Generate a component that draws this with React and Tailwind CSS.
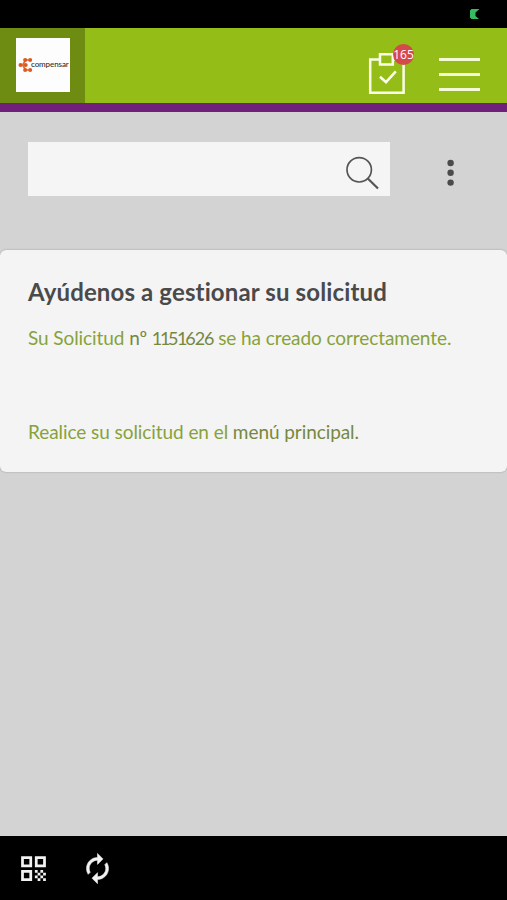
import { MdQrCode } from 'react-icons/md';

function Logo() {
  return (
    <div className="w-[85px] h-full bg-[#6f8c12] pt-[10px] pl-4">
      <div className="w-[54px] h-[54px] bg-[#fdfdfd] flex items-center pl-[2px]">
        <svg width="15" height="16" viewBox="0 0 15 16" className="shrink-0">
          <g stroke="#e2692c" strokeWidth="1.6">
            <path d="M7 3h5M7 13h5M3 8h5M5 7l3-4M5 9l3 4" fill="none" />
          </g>
          <g fill="#dc5b22">
            <circle cx="7.2" cy="3" r="2.1" />
            <circle cx="12.2" cy="3" r="2" />
            <circle cx="2.6" cy="8" r="2.1" />
            <circle cx="7.6" cy="8" r="2.1" />
            <circle cx="7.2" cy="13" r="2.1" />
            <circle cx="12.2" cy="13" r="2" />
          </g>
        </svg>
        <span className="-ml-[2px] -mt-[2px] text-[8px] leading-none tracking-[-0.1px] font-medium text-[#30302e] font-['Lato',sans-serif]">
          compensar
        </span>
      </div>
    </div>
  );
}

function TasksButton() {
  return (
    <button type="button" className="relative w-[46px] h-[54px]">
      <svg width="46" height="54" viewBox="0 0 46 54" fill="none" stroke="#fbffe9" strokeWidth="2.5">
        <path d="M11 17.5H2.2v33.2h33.4V17.5H25" />
        <path d="M12 12.2h12.8v10.3H12z" />
        <path d="M12 34.8l6 5.4L27.8 29.4" />
      </svg>
      <span className="absolute left-[25px] top-[2px] w-[21px] h-[21px] rounded-full bg-[#d5484b] text-white text-[12px] leading-[21px] font-medium whitespace-nowrap font-['Open_Sans',sans-serif] flex justify-center">
        165
      </span>
    </button>
  );
}

function RefreshIcon() {
  return (
    <svg width="33" height="33" viewBox="0 0 24 24" className="ml-[31px]" fill="currentColor" stroke="currentColor" strokeWidth="0.4">
      <path d="M12 6v3l4-4-4-4v3c-4.42 0-8 3.58-8 8 0 1.57.46 3.03 1.24 4.26L6.7 14.8c-.45-.83-.7-1.79-.7-2.8 0-3.31 2.69-6 6-6z" />
      <path d="M18.76 7.74L17.3 9.2c.44.84.7 1.79.7 2.8 0 3.31-2.69 6-6 6v-3l-4 4 4 4v-3c4.42 0 8-3.58 8-8 0-1.57-.46-3.03-1.24-4.26z" />
    </svg>
  );
}

export default function App() {
  return (
    <div className="w-full h-[900px] flex flex-col bg-[#d3d3d3] font-['Lato',sans-serif] [font-variant-ligatures:none]">
      {/* Status bar */}
      <div className="h-7 shrink-0 bg-black flex justify-end pt-[9px] pr-[27px]">
        <svg width="10" height="11" viewBox="0 0 10 11">
          <path d="M1.5 0h8L5.5 3.5v3.5l3.5 3H1.5L0 8.5v-7z" fill="#35bb60" />
        </svg>
      </div>

      {/* Header */}
      <header className="h-[84px] shrink-0 flex bg-[#94be17] border-b-[9px] border-[#70207b]">
        <Logo />
        <div className="ml-auto flex pt-[14px] pr-[27px]">
          <TasksButton />
          <button type="button" className="ml-[25px] mt-4 h-[33px] w-[41px] flex flex-col justify-between">
            <span className="w-full h-[3px] bg-[#f3fad5]" />
            <span className="w-full h-[3px] bg-[#f3fad5]" />
            <span className="w-full h-[3px] bg-[#f3fad5]" />
          </button>
        </div>
      </header>

      {/* Search */}
      <div className="h-[138px] shrink-0 flex pt-[30px] pl-7">
        <div className="w-[362px] h-[54px] bg-[#f5f5f5] flex justify-end pt-[13px] pr-[11px]">
          <svg width="34" height="35" viewBox="0 0 34 35" fill="none" stroke="#555">
            <circle cx="14.2" cy="14.8" r="12.2" strokeWidth="1.7" />
            <path d="M22.8 23.5l10.2 10" strokeWidth="2.2" />
          </svg>
        </div>
        <svg width="8" height="28" viewBox="0 0 8 28" className="ml-[57px] mt-[17px]" fill="#4b4b4b">
          <circle cx="3.6" cy="4" r="3.2" />
          <circle cx="3.6" cy="13.8" r="3.2" />
          <circle cx="3.6" cy="23.6" r="3.2" />
        </svg>
      </div>

      {/* Message */}
      <main className="h-[222px] shrink-0 rounded-md bg-[#f4f4f4] shadow-[0_0_2px_rgba(0,0,0,0.3)] pl-7 pt-[27px] whitespace-nowrap">
        <h1 className="text-[24px] leading-[30px] tracking-[0.13px] font-bold text-[#4a4a4a]">
          Ayúdenos a gestionar su solicitud
        </h1>
        <p className="mt-[18px] text-[19px] leading-[26px] tracking-[-0.08px] text-[#87a23a]">
          <span>Su Solicitud </span>
          <span className="text-[#76883f]">
            nº <span className="text-[18px] tracking-[-2.4px]">11</span>
            <span className="text-[18px] tracking-[-1.5px]">5</span>
            <span className="text-[18px] tracking-[-2px]">1</span>
            <span className="text-[18px] tracking-[-1.1px]">626</span>
          </span>
          <span> se ha creado correctamente.</span>
        </p>
        <p className="mt-[68px] text-[19px] leading-[26px] tracking-[-0.07px] text-[#87a23a]">
          <span>Realice su solicitud en el </span>
          <span className="text-[#76883f]">menú principal.</span>
        </p>
      </main>

      {/* Bottom bar */}
      <footer className="mt-auto h-16 shrink-0 bg-black flex pt-4 pl-[17px] text-[#f2f2f2]">
        <MdQrCode size={33} />
        <RefreshIcon />
      </footer>
    </div>
  );
}
